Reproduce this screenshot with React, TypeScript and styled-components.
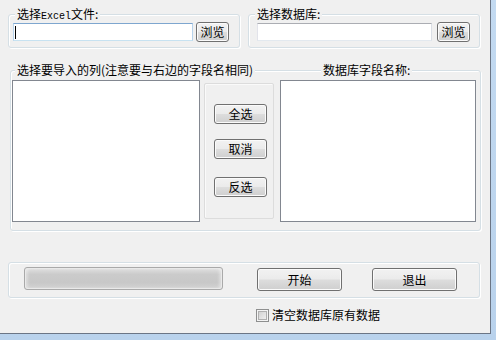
import styled, { createGlobalStyle } from "styled-components";

const GlobalStyle = createGlobalStyle`
  html, body {
    margin: 0;
    padding: 0;
    background: #fff;
    overflow: hidden;
  }
  body {
    font-family: "Noto Sans CJK SC", "Noto Sans", sans-serif;
    font-size: 12px;
    color: #000;
  }
`;

export default function App() {
  return (
    <>
      <GlobalStyle />
      <Frame>
        <Client>
          <TopRow>
            <GroupBox $w={232}>
              <Caption>
                <CaptionText>
                  选择<Latin>Excel</Latin>文件:
                </CaptionText>
              </Caption>
              <PickRow>
                <TextBox $w={180} $ml={0} $focused>
                  <Caret />
                </TextBox>
                <WinButton $w={33} $h={20} $ml={3}>
                  浏览
                </WinButton>
              </PickRow>
            </GroupBox>
            <GroupBox $w={232}>
              <Caption>
                <CaptionText>选择数据库:</CaptionText>
              </Caption>
              <PickRow>
                <TextBox $w={175} $ml={4} />
                <WinButton $w={33} $h={20} $ml={5}>
                  浏览
                </WinButton>
              </PickRow>
            </GroupBox>
          </TopRow>

          <ColumnsGroup>
            <ColumnsCaption>
              <CaptionText $ml={3}>选择要导入的列(注意要与右边的字段名相同)</CaptionText>
              <CaptionText $ml={41}>数据库字段名称:</CaptionText>
            </ColumnsCaption>
            <ListsRow>
              <ListBox $w={188} />
              <ButtonPanel>
                <WinButton $w={53} $h={20}>全选</WinButton>
                <WinButton $w={53} $h={20}>取消</WinButton>
                <WinButton $w={53} $h={20} $mt={3}>反选</WinButton>
              </ButtonPanel>
              <ListBox $w={196} />
            </ListsRow>
          </ColumnsGroup>

          <ActionGroup>
            <Progress />
            <WinButton $w={85} $h={23} $ml={34} $mt={1}>开始</WinButton>
            <WinButton $w={85} $h={23} $ml={30} $mt={1}>退出</WinButton>
          </ActionGroup>

          <CheckRow>
            <CheckBox />
            <CheckLabel>清空数据库原有数据</CheckLabel>
          </CheckRow>
        </Client>
      </Frame>
    </>
  );
}

const Frame = styled.div`
  width: fit-content;
  padding: 0 8px 6px 0;
  background: linear-gradient(to bottom, #c3daf1, #b9d2ec);
  box-shadow: 0 4px 12px rgba(0, 0, 0, 0.55);
`;

const Client = styled.div`
  box-sizing: border-box;
  width: 491px;
  height: 334px;
  padding: 14px 0 0 8px;
  background: #f0f0f0;
  border-right: 1px solid #6b7585;
  border-bottom: 1px solid #6b7585;
  display: flex;
  flex-direction: column;
`;

const TopRow = styled.div`
  display: flex;
  gap: 8px;
`;

const GroupBox = styled.div<{ $w: number }>`
  box-sizing: border-box;
  width: ${(p) => p.$w}px;
  padding: 0 4px 5px 4px;
  border: 1px solid #d5dfe5;
  border-radius: 3px;
  box-shadow: inset 1px 1px 0 #fff, 1px 1px 0 #fff;
`;

const Caption = styled.div`
  display: flex;
  height: 14px;
  margin-top: -8px;
  padding-left: 2px;
`;

const CaptionText = styled.span<{ $ml?: number }>`
  margin-left: ${(p) => p.$ml ?? 0}px;
  padding: 0 2px;
  background: #f0f0f0;
  line-height: 14px;
  white-space: nowrap;
`;

const Latin = styled.span`
  font-family: "Liberation Mono", monospace;
  font-size: 10px;
`;

const PickRow = styled.div`
  display: flex;
  align-items: center;
  height: 20px;
  margin-top: 1px;
`;

const TextBox = styled.div<{ $w: number; $ml: number; $focused?: boolean }>`
  box-sizing: border-box;
  width: ${(p) => p.$w}px;
  height: 18px;
  margin-left: ${(p) => p.$ml}px;
  background: #fff;
  border: 1px solid;
  border-color: ${(p) =>
    p.$focused ? "#7ea6cf #b7d3ec #c7e2f1 #b7d3ec" : "#abadb3 #dbdfe6 #e3e9ef #e2e3ea"};
  display: flex;
  align-items: center;
`;

const Caret = styled.span`
  width: 1px;
  height: 13px;
  margin-left: 1px;
  background: #000;
`;

const WinButton = styled.button<{ $w: number; $h: number; $ml?: number; $mt?: number }>`
  box-sizing: border-box;
  width: ${(p) => p.$w}px;
  height: ${(p) => p.$h}px;
  margin: ${(p) => p.$mt ?? 0}px 0 0 ${(p) => p.$ml ?? 0}px;
  padding: 0;
  border: 1px solid #707070;
  border-radius: 3px;
  background: linear-gradient(to bottom, #f2f2f2 0%, #ebebeb 48%, #dddddd 52%, #cfcfcf 100%);
  box-shadow: inset 0 0 0 1px #fbfbfb;
  font-family: inherit;
  font-size: 12px;
  line-height: 1;
  color: #000;
  flex-shrink: 0;
`;

const ColumnsGroup = styled.div`
  box-sizing: border-box;
  width: 471px;
  margin: 22px 0 0 2px;
  padding: 0 4px 8px 1px;
  border: 1px solid #d5dfe5;
  border-radius: 3px;
  box-shadow: inset 1px 1px 0 #fff, 1px 1px 0 #fff;
`;

const ColumnsCaption = styled.div`
  display: grid;
  grid-template-columns: 268px 1fr;
  height: 14px;
  margin-top: -8px;
  justify-items: start;
`;

const ListsRow = styled.div`
  display: flex;
  align-items: flex-start;
  margin-top: 3px;
`;

const ListBox = styled.div<{ $w: number }>`
  box-sizing: border-box;
  width: ${(p) => p.$w}px;
  height: 142px;
  background: #fff;
  border: 1px solid #828790;
`;

const ButtonPanel = styled.div`
  box-sizing: border-box;
  width: 70px;
  height: 136px;
  margin: 3px 6px 0 4px;
  padding: 20px 0 0 9px;
  border: 1px solid #dcdcdc;
  border-radius: 2px;
  box-shadow: inset 1px 1px 0 #fafafa;
  display: flex;
  flex-direction: column;
  gap: 15px;
`;

const ActionGroup = styled.div`
  box-sizing: border-box;
  width: 472px;
  height: 36px;
  margin-top: 31px;
  padding: 4px 0 0 15px;
  border: 1px solid #d5dfe5;
  border-radius: 3px;
  box-shadow: inset 1px 1px 0 #fff, 1px 1px 0 #fff;
  display: flex;
  align-items: flex-start;
`;

const Progress = styled.div`
  box-sizing: border-box;
  width: 199px;
  height: 23px;
  border: 1px solid #a9a9a9;
  border-radius: 3px;
  background: linear-gradient(to bottom, #e2e2e2 0%, #cbcbcb 30%, #c8c8c8 70%, #d4d4d4 100%);
  box-shadow: inset 0 0 0 1px #e9e9e9, inset 3px 0 3px rgba(255, 255, 255, 0.35),
    inset -3px 0 3px rgba(255, 255, 255, 0.35);
`;

const CheckRow = styled.div`
  display: flex;
  align-items: center;
  margin: 10px 0 0 248px;
`;

const CheckBox = styled.span`
  box-sizing: border-box;
  width: 13px;
  height: 13px;
  border: 1px solid #8e8f8f;
  background: #f4f4f4;
  box-shadow: inset 0 0 0 1px #f4f4f4, inset 0 0 0 2px #b0b0b0;
  background-image: linear-gradient(135deg, #cbcbcb, #f6f6f6);
`;

const CheckLabel = styled.span`
  margin-left: 3px;
  line-height: 14px;
  white-space: nowrap;
`;
